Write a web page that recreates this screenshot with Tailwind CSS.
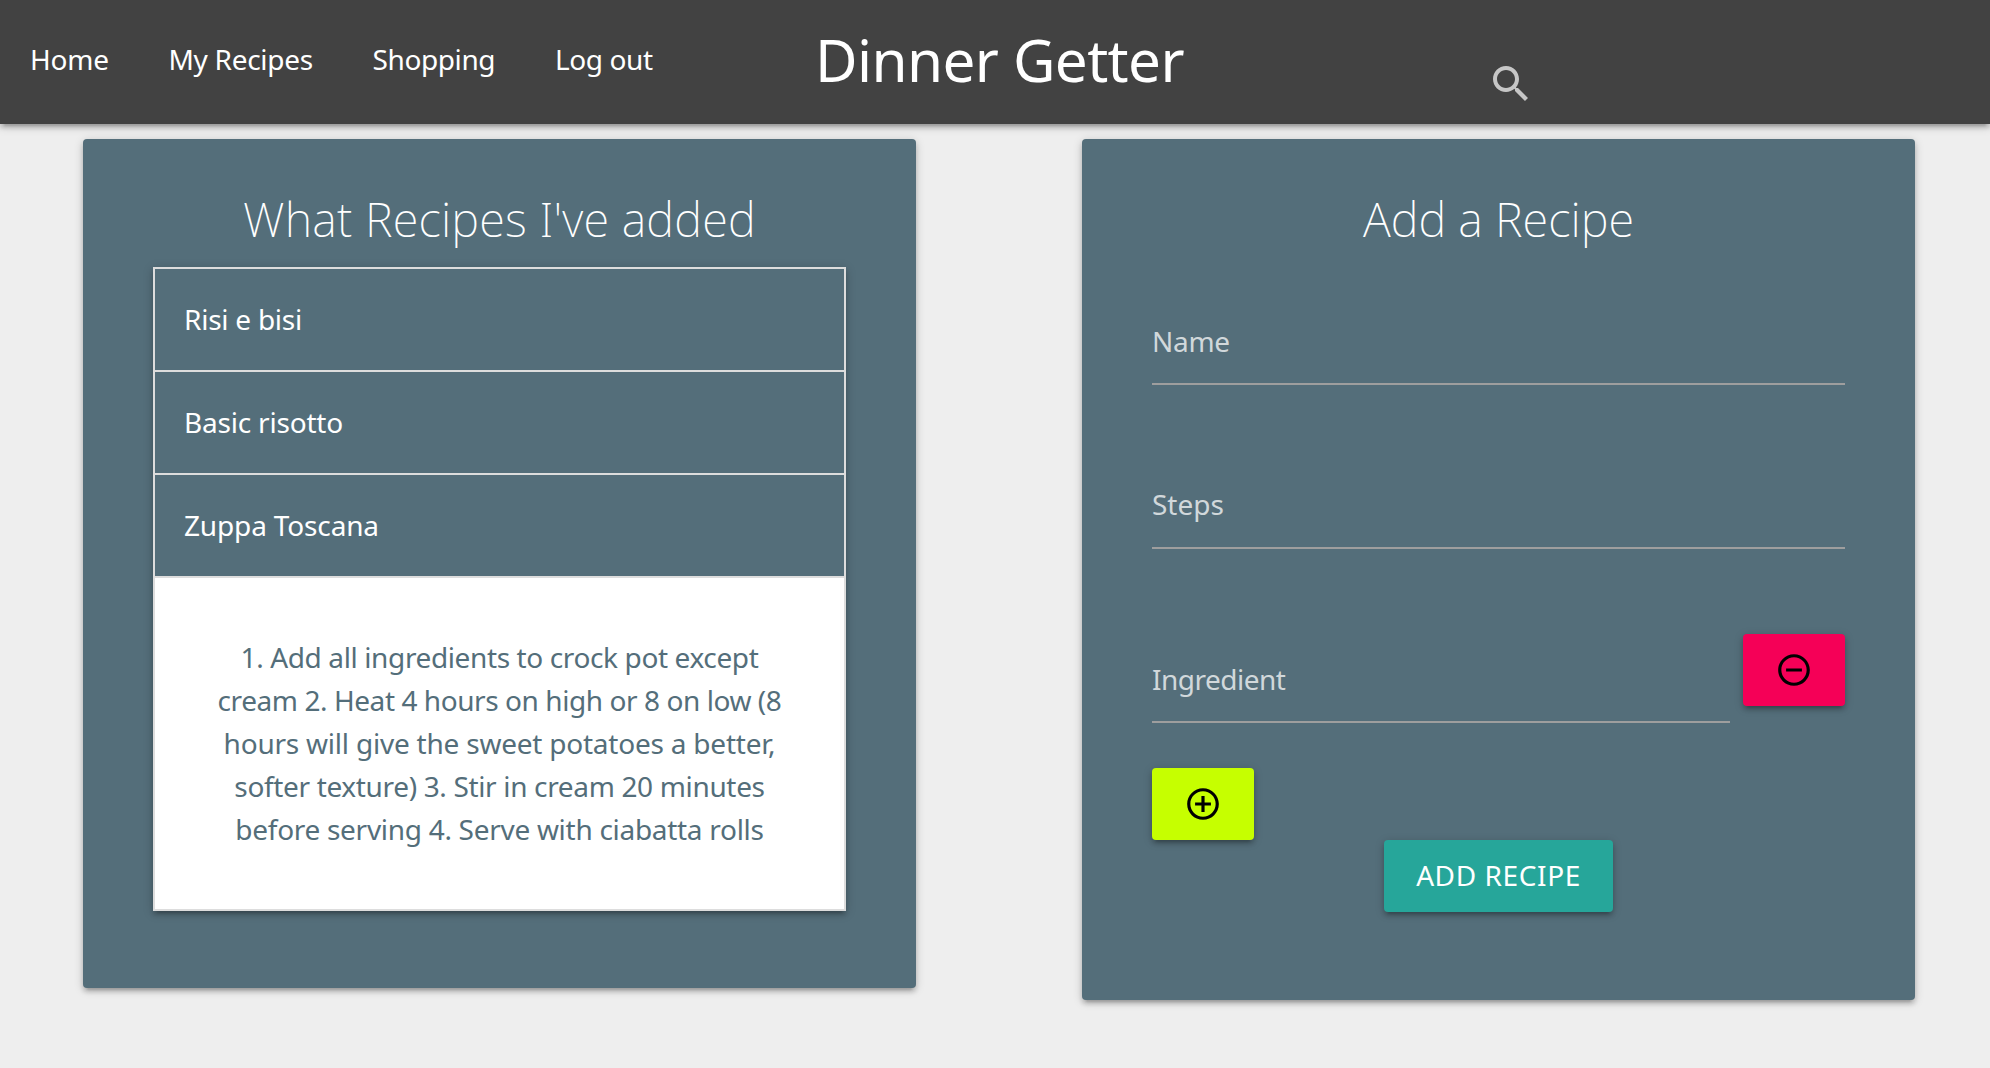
<!DOCTYPE html>
<html lang="en">
<head>
<meta charset="utf-8">
<title>Dinner Getter</title>
<script src="https://cdn.jsdelivr.net/npm/@tailwindcss/browser@4"></script>
</head>
<body class="h-[1068px] overflow-hidden bg-[#eeeeee] font-['Noto_Sans',sans-serif] text-[28px] text-white">
  <header class="relative flex h-[124px] items-center bg-[#424242] pb-1 shadow-[0_4px_4px_0_rgba(0,0,0,0.14),0_6px_2px_-4px_rgba(0,0,0,0.12),0_2px_10px_0_rgba(0,0,0,0.2)]">
    <nav class="flex w-[815px] shrink-0 gap-[60px] pb-0.5 pl-[30px] tracking-[-0.3px] whitespace-nowrap">
      <a class="w-[78.5px] tracking-[-0.2px]">Home</a>
      <a class="w-[144px]">My Recipes</a>
      <a class="w-[122.5px] tracking-[-0.4px]">Shopping</a>
      <a class="tracking-[-0.4px]">Log out</a>
    </nav>
    <h1 class="w-[672px] text-[58.4px] leading-[80px] tracking-[-0.6px]">Dinner Getter</h1>
    <svg class="mt-[48px] size-12" viewBox="0 0 24 24" fill="#c6c6c6"><path d="M15.5 14h-.79l-.28-.27C15.41 12.59 16 11.11 16 9.5 16 5.91 13.09 3 9.5 3S3 5.91 3 9.5 5.91 16 9.5 16c1.61 0 3.09-.59 4.23-1.57l.27.28v.79l5 4.99L20.49 19l-4.99-5zm-6 0C7.01 14 5 11.99 5 9.5S7.01 5 9.5 5 14 7.01 14 9.5 11.99 14 9.5 14z"/></svg>
  </header>

  <main class="grid grid-cols-[833px_833px] items-start gap-x-[166px] pt-[15px] pl-[83px]">
    <section class="h-[849px] rounded-[4px] bg-[#546e7a] px-[70px] pt-[48px] shadow-[0_4px_4px_0_rgba(0,0,0,0.14),0_6px_2px_-4px_rgba(0,0,0,0.12),0_2px_10px_0_rgba(0,0,0,0.2)]">
      <h2 class="h-20 text-center text-[47px] leading-[64px] font-extralight tracking-[0.2px]">What Recipes I've added</h2>
      <ul class="border-x-2 border-t-2 border-[#dddddd] shadow-[0_4px_4px_0_rgba(0,0,0,0.14),0_6px_2px_-4px_rgba(0,0,0,0.12),0_2px_10px_0_rgba(0,0,0,0.2)]">
        <li class="h-[103px] border-b-2 border-[#dddddd] pl-[29px] leading-[101px] tracking-[-0.25px]">Risi e bisi</li>
        <li class="h-[103px] border-b-2 border-[#dddddd] pl-[29px] leading-[101px] tracking-[-0.2px]">Basic risotto</li>
        <li class="h-[103px] border-b-2 border-[#dddddd] pl-[29px] leading-[101px] tracking-[-0.15px]">Zuppa Toscana</li>
        <li class="h-[333px] border-b-2 border-[#dddddd] bg-white pt-[58px] text-center leading-[43px] tracking-[-0.34px] whitespace-nowrap text-[#546e7a]"><span class="tracking-[-0.38px]">1. Add all ingredients to crock pot except</span><br><span class="tracking-[-0.43px]">cream 2. Heat 4 hours on high or 8 on low (8</span><br><span class="tracking-[-0.22px]">hours will give the sweet potatoes a better,</span><br>softer texture) 3. Stir in cream 20 minutes<br><span class="tracking-[-0.29px]">before serving 4. Serve with ciabatta rolls</span></li>
      </ul>
    </section>

    <section class="h-[861px] rounded-[4px] bg-[#546e7a] px-[70px] pt-[48px] shadow-[0_4px_4px_0_rgba(0,0,0,0.14),0_6px_2px_-4px_rgba(0,0,0,0.12),0_2px_10px_0_rgba(0,0,0,0.2)]">
      <h2 class="h-[115px] text-center text-[47px] leading-[64px] font-extralight">Add a Recipe</h2>
      <div class="h-[83px] border-b-2 border-[#9e9e9e] pt-[19px] leading-[40px] tracking-[-0.3px] text-[#d1d8db]">Name</div>
      <div class="mt-[81px] h-[83px] border-b-2 border-[#9e9e9e] pt-[18px] leading-[40px] text-[#d1d8db]">Steps</div>
      <div class="mt-[85px] flex h-[134px] items-start justify-between">
        <div class="mt-1 h-[85px] w-[578px] border-b-2 border-[#9e9e9e] pt-[21px] leading-[40px] tracking-[-0.5px] text-[#d1d8db]">Ingredient</div>
        <button class="flex h-[72px] w-[102px] items-center justify-center rounded-[4px] bg-[#f50057] shadow-[0_4px_4px_0_rgba(0,0,0,0.14),0_6px_2px_-4px_rgba(0,0,0,0.12),0_2px_10px_0_rgba(0,0,0,0.2)]" aria-label="Remove ingredient">
          <svg class="size-[38px]" viewBox="0 0 24 24" fill="#000"><path d="M7 11v2h10v-2H7zm5-9C6.48 2 2 6.48 2 12s4.48 10 10 10 10-4.48 10-10S17.52 2 12 2zm0 18c-4.41 0-8-3.59-8-8s3.59-8 8-8 8 3.59 8 8-3.59 8-8 8z"/></svg>
        </button>
      </div>
      <button class="flex h-[72px] w-[102px] items-center justify-center rounded-[4px] bg-[#c6ff00] shadow-[0_4px_4px_0_rgba(0,0,0,0.14),0_6px_2px_-4px_rgba(0,0,0,0.12),0_2px_10px_0_rgba(0,0,0,0.2)]" aria-label="Add ingredient">
        <svg class="size-[38px]" viewBox="0 0 24 24" fill="#000"><path d="M13 7h-2v4H7v2h4v4h2v-4h4v-2h-4V7zm-1-5C6.48 2 2 6.48 2 12s4.48 10 10 10 10-4.48 10-10S17.52 2 12 2zm0 18c-4.41 0-8-3.59-8-8s3.59-8 8-8 8 3.59 8 8-3.59 8-8 8z"/></svg>
      </button>
      <button class="mx-auto block h-[72px] w-[229px] rounded-[4px] bg-[#26a69a] pb-0.5 leading-[70px] tracking-[0.6px] shadow-[0_4px_4px_0_rgba(0,0,0,0.14),0_6px_2px_-4px_rgba(0,0,0,0.12),0_2px_10px_0_rgba(0,0,0,0.2)]">ADD RECIPE</button>
    </section>
  </main>
</body>
</html>
